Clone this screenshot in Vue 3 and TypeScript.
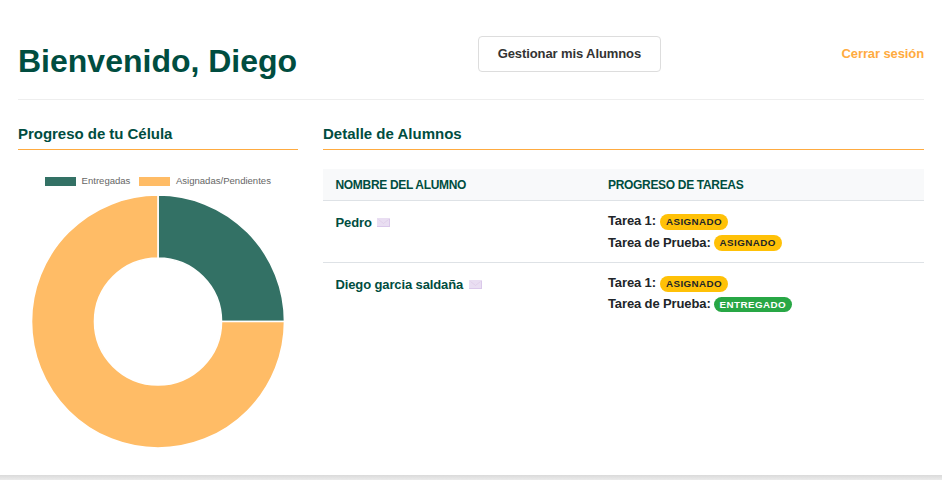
<script setup lang="ts">
interface Task {
  name: string
  status: 'asignado' | 'entregado'
}
interface Student {
  name: string
  tasks: Task[]
}

const students: Student[] = [
  {
    name: 'Pedro',
    tasks: [
      { name: 'Tarea 1:', status: 'asignado' },
      { name: 'Tarea de Prueba:', status: 'asignado' },
    ],
  },
  {
    name: 'Diego garcia saldaña',
    tasks: [
      { name: 'Tarea 1:', status: 'asignado' },
      { name: 'Tarea de Prueba:', status: 'entregado' },
    ],
  },
]
</script>

<template>
  <main class="panel">
    <header class="top">
      <h1>Bienvenido, Diego</h1>
      <button class="manage" type="button">Gestionar mis Alumnos</button>
      <a class="logout">Cerrar sesión</a>
    </header>
    <div class="columns">
      <section class="progress">
        <h2>Progreso de tu Célula</h2>
        <div class="legend">
          <span class="key"><i class="swatch done"></i>Entregadas</span>
          <span class="key"><i class="swatch pending"></i>Asignadas/Pendientes</span>
        </div>
        <svg class="chart" width="280" height="254" viewBox="0 0 280 254">
          <g stroke="#fff" stroke-width="1.600" stroke-linejoin="bevel">
            <path d="M140 0A126.500 126.500 0 0 1 266.500 126.500H203.500A63.500 63.500 0 0 0 140 63Z" fill="#337165" />
            <path d="M266.500 126.500A126.500 126.500 0 1 1 140 0V63A63.500 63.500 0 1 0 203.500 126.500Z" fill="#ffbc66" />
          </g>
        </svg>
      </section>
      <section class="detail">
        <h2>Detalle de Alumnos</h2>
        <div class="row head">
          <span>NOMBRE DEL ALUMNO</span>
          <span>PROGRESO DE TAREAS</span>
        </div>
        <div v-for="student in students" :key="student.name" class="row student">
          <div class="name">
            <span>{{ student.name }}</span>
            <svg class="mail" width="13" height="9" viewBox="0 0 13 9">
              <rect width="13" height="9" fill="#e9def2" />
              <path d="M0 8.500H13M12.500 1V9" stroke="#dac8ea" />
              <path d="M1.500 1.500L6.500 5.500L11.500 1.500" fill="none" stroke="#dcc8e4" stroke-width=".6" />
            </svg>
          </div>
          <ul>
            <li v-for="task in student.tasks" :key="task.name">
              <span>{{ task.name }}</span>
              <b class="badge" :class="task.status">{{ task.status.toUpperCase() }}</b>
            </li>
          </ul>
        </div>
      </section>
    </div>
  </main>
  <div class="edge"></div>
</template>

<style>
body {
  background: #f0f0f0;
  overflow: hidden;
}
</style>

<style scoped>
.panel {
  box-sizing: border-box;
  height: 475px;
  padding: 18px;
  background: #fff;
  font-family: "Liberation Sans", Arial, sans-serif;
  font-weight: 700;
  color: #212529;
}
.edge {
  height: 5px;
  background: linear-gradient(#dadada, #ebebeb);
}
.top {
  box-sizing: border-box;
  display: flex;
  justify-content: space-between;
  height: 82px;
  padding-top: 18px;
  border-bottom: 1px solid #eee;
}
h1 {
  margin: 7px 0 0;
  font-size: 32px;
  line-height: 37px;
  color: #004d40;
}
.manage {
  box-sizing: border-box;
  width: 183px;
  height: 36px;
  padding: 0;
  border: 1px solid #ddd;
  border-radius: 4px;
  background: #fff;
  font: 700 13px/18px "Liberation Sans", Arial, sans-serif;
  letter-spacing: -0.1px;
  color: #333;
}
.logout {
  padding-top: 9px;
  font-size: 13px;
  line-height: 18px;
  letter-spacing: -0.110px;
  color: #ffab40;
}
.columns {
  display: grid;
  grid-template-columns: 280px 601px;
  gap: 25px;
  padding-top: 25px;
}
h2 {
  box-sizing: border-box;
  height: 25px;
  margin: 0;
  border-bottom: 1px solid #ffab40;
  font-size: 15px;
  line-height: 17px;
  color: #004d40;
}
.progress h2 {
  letter-spacing: -0.030px;
}
.legend {
  display: flex;
  justify-content: center;
  gap: 9px;
  margin-top: 25px;
  font-size: 9.550px;
  font-weight: 400;
  line-height: 12px;
  color: #666;
}
.key {
  display: flex;
  align-items: center;
  gap: 5.500px;
}
.swatch {
  width: 31px;
  height: 9px;
}
.swatch.done {
  background: #337165;
}
.swatch.pending {
  background: #ffbc66;
}
.chart {
  display: block;
  margin-top: 8px;
}
.row {
  display: grid;
  grid-template-columns: 272.500px 1fr;
  box-sizing: border-box;
  padding: 0 12.500px;
}
.row.head {
  height: 32px;
  margin-top: 19px;
  border-bottom: 1px solid #dee2e6;
  background: #f8f9fa;
  font-size: 12px;
  line-height: 32px;
  letter-spacing: -0.320px;
  color: #004d40;
}
.row.student {
  height: 62px;
  padding-top: 9px;
  border-bottom: 1px solid #dee2e6;
  font-size: 13px;
  letter-spacing: -0.120px;
}
.row.student:last-child {
  border-bottom: 0;
}
.name {
  display: flex;
  align-items: center;
  gap: 5.500px;
  height: 24px;
  color: #004d40;
}
.mail {
  margin-top: 1px;
}
ul {
  margin: 0;
  padding: 0;
  list-style: none;
}
li {
  display: flex;
  align-items: center;
  gap: 4px;
  height: 21.500px;
}
li + li {
  gap: 3px;
}
.row.student:last-child li {
  height: 21px;
}
.badge {
  box-sizing: border-box;
  height: 16px;
  margin-top: 2px;
  padding: 0 6px;
  border-radius: 8px;
  font-size: 9.800px;
  line-height: 16px;
  letter-spacing: 0.420px;
}
.asignado {
  background: #ffc107;
  color: #212529;
}
.entregado {
  height: 15px;
  padding-right: 6.500px;
  background: #28a745;
  color: #fff;
}
</style>
